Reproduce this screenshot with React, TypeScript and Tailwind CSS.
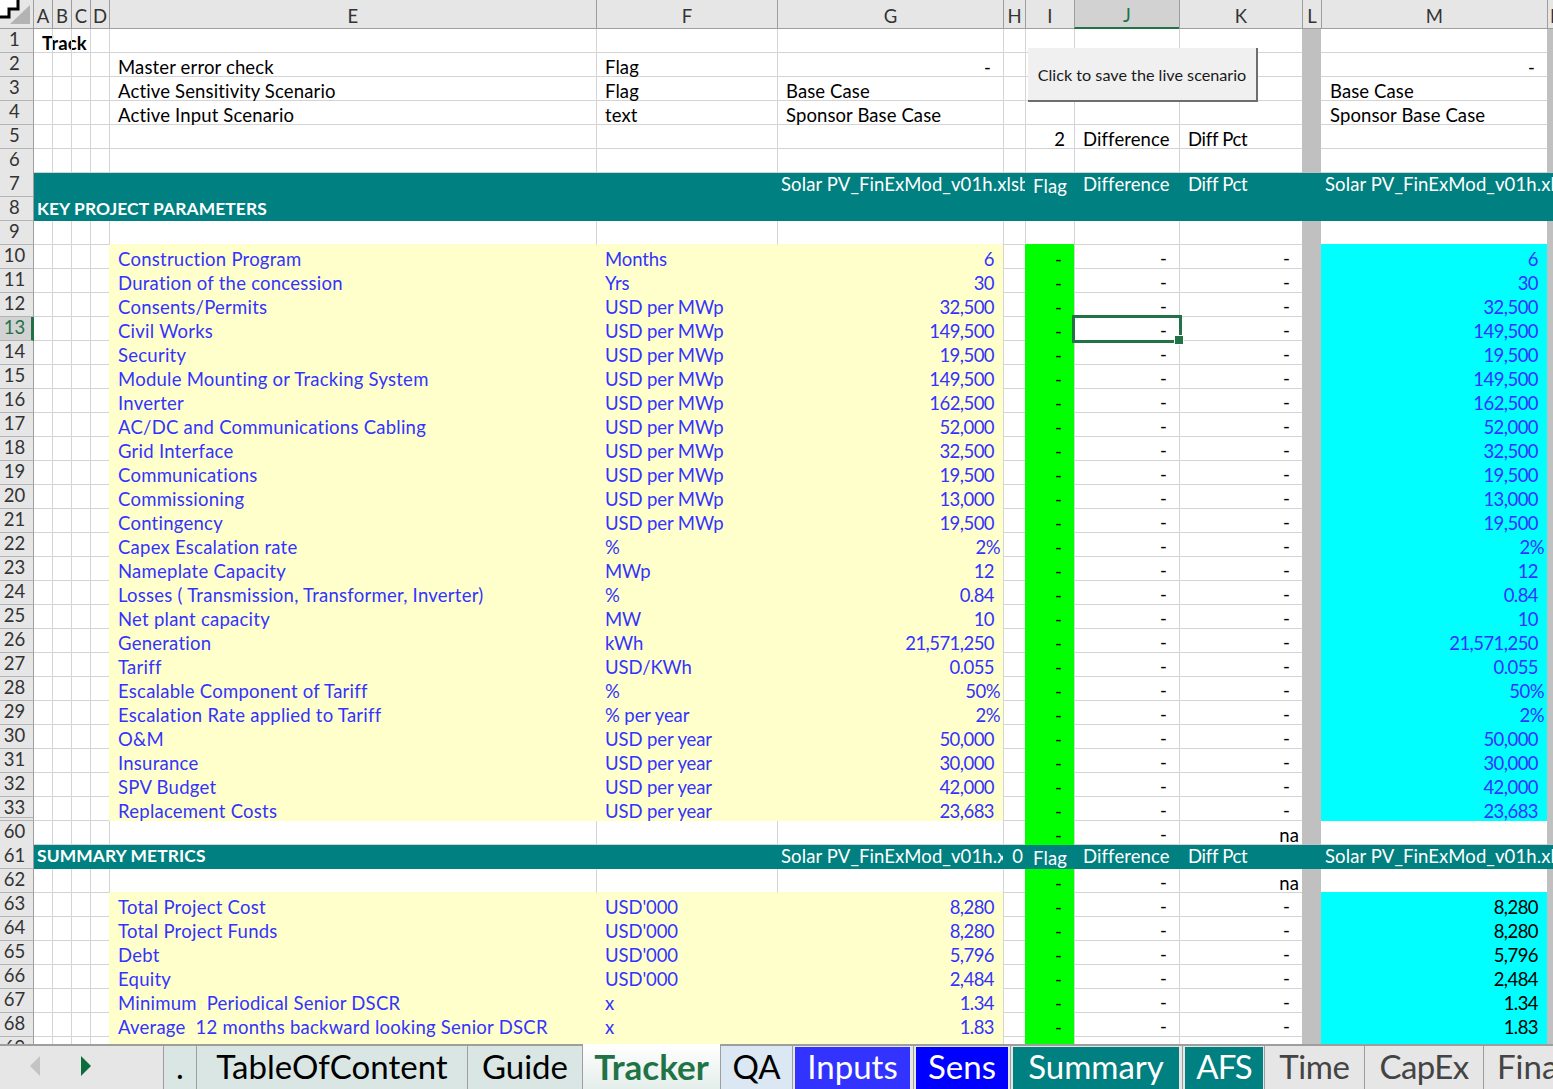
import React from "react";

const COLS =
  "grid grid-rows-[minmax(0,1fr)] grid-cols-[34px_18px_19px_19px_19px_487px_181px_226px_22px_49px_105px_123px_19px_226px_6px]";
const LINE = "border-l border-b border-[#d4d4d4]";
const TXT = "flex items-end whitespace-pre pb-[1px]";
const PLAIN = `${TXT} leading-[16px]`;
const DATA = `${TXT} leading-[18px]`;

type Data = { n: number; e: string; f: string; g: string; pct?: boolean; black?: boolean };

const inputs: Data[] = [
  { n: 10, e: "Construction Program", f: "Months", g: "6" },
  { n: 11, e: "Duration of the concession", f: "Yrs", g: "30" },
  { n: 12, e: "Consents/Permits", f: "USD per MWp", g: "32,500" },
  { n: 13, e: "Civil Works", f: "USD per MWp", g: "149,500" },
  { n: 14, e: "Security", f: "USD per MWp", g: "19,500" },
  { n: 15, e: "Module Mounting or Tracking System", f: "USD per MWp", g: "149,500" },
  { n: 16, e: "Inverter", f: "USD per MWp", g: "162,500" },
  { n: 17, e: "AC/DC and Communications Cabling", f: "USD per MWp", g: "52,000" },
  { n: 18, e: "Grid Interface", f: "USD per MWp", g: "32,500" },
  { n: 19, e: "Communications", f: "USD per MWp", g: "19,500" },
  { n: 20, e: "Commissioning", f: "USD per MWp", g: "13,000" },
  { n: 21, e: "Contingency", f: "USD per MWp", g: "19,500" },
  { n: 22, e: "Capex Escalation rate", f: "%", g: "2%", pct: true },
  { n: 23, e: "Nameplate Capacity", f: "MWp", g: "12" },
  { n: 24, e: "Losses ( Transmission, Transformer, Inverter)", f: "%", g: "0.84" },
  { n: 25, e: "Net plant capacity", f: "MW", g: "10" },
  { n: 26, e: "Generation", f: "kWh", g: "21,571,250" },
  { n: 27, e: "Tariff", f: "USD/KWh", g: "0.055" },
  { n: 28, e: "Escalable Component of Tariff", f: "%", g: "50%", pct: true },
  { n: 29, e: "Escalation Rate applied to Tariff", f: "% per year", g: "2%", pct: true },
  { n: 30, e: "O&M", f: "USD per year", g: "50,000" },
  { n: 31, e: "Insurance", f: "USD per year", g: "30,000" },
  { n: 32, e: "SPV Budget", f: "USD per year", g: "42,000" },
  { n: 33, e: "Replacement Costs", f: "USD per year", g: "23,683" },
];

const metrics: Data[] = [
  { n: 63, e: "Total Project Cost", f: "USD'000", g: "8,280", black: true },
  { n: 64, e: "Total Project Funds", f: "USD'000", g: "8,280", black: true },
  { n: 65, e: "Debt", f: "USD'000", g: "5,796", black: true },
  { n: 66, e: "Equity", f: "USD'000", g: "2,484", black: true },
  { n: 67, e: "Minimum  Periodical Senior DSCR", f: "x", g: "1.34", black: true },
  { n: 68, e: "Average  12 months backward looking Senior DSCR", f: "x", g: "1.83", black: true },
  { n: 69, e: "Lockup threshold", f: "x", g: "1.10", black: true },
];

function RowHead({ n, active }: { n: number; active?: boolean }) {
  if (active) {
    return (
      <div className="flex items-center justify-center pr-[2px] pb-[3px] bg-[#d2d2d2] text-[#217346] border-b border-[#b4b4b4] border-r-[3px] border-r-[#217346]">
        {n}
      </div>
    );
  }
  return (
    <div
      className={`flex items-center justify-center pr-[4px] pb-[3px] bg-[#e6e6e6] text-[#333] border-b border-[#b4b4b4] border-r border-r-[#9e9e9e] ${
        n === 33 ? "shadow-[inset_0_-2px_0_#e6e6e6,inset_0_-3px_0_#b4b4b4]" : ""
      }`}
    >
      {n}
    </div>
  );
}

function Gutter() {
  return (
    <>
      <div className="border-b border-[#d4d4d4]" />
      <div className={LINE} />
      <div className={LINE} />
      <div className={LINE} />
    </>
  );
}

function PlainRow({
  n,
  fillNext,
  e,
  f,
  g,
  gDash,
  i,
  j,
  k,
  m,
  mDash,
}: {
  n: number;
  fillNext?: boolean;
  e?: string;
  f?: string;
  g?: string;
  gDash?: boolean;
  i?: string;
  j?: string;
  k?: string;
  m?: string;
  mDash?: boolean;
}) {
  const yb = fillNext ? "border-b-[#ffffcc]" : "border-b-[#d4d4d4]";
  return (
    <div className={`${COLS} h-[24px]`}>
      <RowHead n={n} />
      <Gutter />
      <div className={`${PLAIN} pl-[8px] tracking-[0.15px] border-l border-b border-l-[#d4d4d4] ${yb}`}>{e}</div>
      <div className={`${PLAIN} pl-[8px] border-l border-b border-l-[#d4d4d4] ${yb}`}>{f}</div>
      <div className={`${PLAIN} border-l border-b border-l-[#d4d4d4] ${yb} ${gDash ? "justify-end pr-[12px]" : "pl-[8px]"}`}>{g}</div>
      <div className={LINE} />
      <div className={`${PLAIN} justify-end pr-[9px] border-l border-b border-l-[#d4d4d4] ${fillNext ? "border-b-[#00ff00]" : "border-b-[#d4d4d4]"}`}>{i}</div>
      <div className={`${PLAIN} pl-[8px] ${LINE}`}>{j}</div>
      <div className={`${PLAIN} pl-[8px] tracking-[-0.3px] ${LINE}`}>{k}</div>
      <div className="bg-[#c0c0c0]" />
      <div className={`${PLAIN} border-b ${fillNext ? "border-b-[#00ffff]" : "border-b-[#d4d4d4]"} ${mDash ? "justify-end pr-[12px]" : "pl-[9px]"}`}>{m}</div>
      <div className="bg-[#c0c0c0]" />
    </div>
  );
}

function DataRow({ d }: { d: Data }) {
  const blue = "text-[#3333ff]";
  return (
    <div className={`${COLS} h-[24px]`}>
      <RowHead n={d.n} active={d.n === 13} />
      <Gutter />
      <div className={`${DATA} pl-[9px] tracking-[0.25px] bg-[#ffffcc] ${blue}`}>{d.e}</div>
      <div className={`${DATA} pl-[9px] tracking-[-0.1px] bg-[#ffffcc] ${blue}`}>{d.f}</div>
      <div className={`${DATA} justify-end tracking-[-0.55px] bg-[#ffffcc] ${blue} ${d.pct ? "pr-[3px]" : "pr-[9px]"}`}>{d.g}</div>
      <div className={LINE} />
      <div className={`${DATA} justify-end pr-[12px] bg-[#00ff00]`}>-</div>
      <div className={`${DATA} justify-end pr-[12px] ${LINE}`}>-</div>
      <div className={`${DATA} justify-end pr-[12px] ${LINE}`}>-</div>
      <div className="bg-[#c0c0c0]" />
      <div className={`${DATA} justify-end tracking-[-0.55px] bg-[#00ffff] ${d.black ? "text-black" : blue} ${d.pct ? "pr-[3px]" : "pr-[9px]"}`}>{d.g}</div>
      <div className="bg-[#c0c0c0]" />
    </div>
  );
}

function NaRow({ n, fillNext }: { n: number; fillNext?: boolean }) {
  const yb = fillNext ? "border-b-[#ffffcc]" : "border-b-[#d4d4d4]";
  return (
    <div className={`${COLS} h-[24px]`}>
      <RowHead n={n} />
      <Gutter />
      <div className={`border-l border-l-[#d4d4d4] border-b ${yb}`} />
      <div className={`border-l border-l-[#d4d4d4] border-b ${yb}`} />
      <div className={`border-l border-l-[#d4d4d4] border-b ${yb}`} />
      <div className={LINE} />
      <div className={`${DATA} justify-end pr-[12px] bg-[#00ff00]`}>-</div>
      <div className={`${DATA} justify-end pr-[12px] ${LINE}`}>-</div>
      <div className={`${PLAIN} justify-end pr-[3px] ${LINE}`}>na</div>
      <div className="bg-[#c0c0c0]" />
      <div className={`border-b ${fillNext ? "border-b-[#00ffff]" : "border-b-[#d4d4d4]"}`} />
      <div className="bg-[#c0c0c0]" />
    </div>
  );
}

const Solar = "Solar PV_FinExMod_v01h.xlsb";

function Header() {
  const base =
    "flex items-center justify-center bg-[#e6e6e6] text-[#333] border-l border-l-[#9e9e9e] border-b border-b-[#9e9e9e] pt-[3px]";
  const labels = ["B", "C", "D", "E", "F", "G", "H", "I"];
  return (
    <div className={`${COLS} h-[29px]`}>
      <div className="bg-[#e6e6e6] border-r border-r-[#9e9e9e] border-b border-b-[#9e9e9e] overflow-hidden">
        <svg width="33" height="28" viewBox="0 0 33 28">
          <polygon points="10,24 30,5 30,24" fill="#b3b3b3" />
          <polygon points="0,0 18,0 18,9 9,9 9,17 0,17" fill="#ffffff" />
          <polyline points="18,0 18,9 9,9 9,17 0,17" fill="none" stroke="#000000" strokeWidth="3" />
        </svg>
      </div>
      <div className="flex items-center justify-center bg-[#e6e6e6] text-[#333] border-b border-b-[#9e9e9e] pt-[3px]">A</div>
      {labels.map((l) => (
        <div key={l} className={base}>
          {l}
        </div>
      ))}
      <div className="flex items-center justify-center bg-[#d2d2d2] text-[#217346] border-l border-l-[#9e9e9e] border-b-2 border-b-[#217346] pt-[3px]">
        J
      </div>
      <div className={base}>K</div>
      <div className={base}>L</div>
      <div className={base}>M</div>
      <div className="flex items-center bg-[#e6e6e6] text-[#333] border-l border-l-[#9e9e9e] border-b border-b-[#9e9e9e] pt-[3px] pl-[2px] overflow-hidden">
        N
      </div>
    </div>
  );
}

function Tab({
  label,
  w,
  inner = "",
  text = "text-black",
}: {
  label: string;
  w: string;
  inner?: string;
  text?: string;
}) {
  return (
    <div className={`${w} h-full border-r border-r-[#9e9e9e] flex items-center justify-center pb-[3px] whitespace-nowrap ${inner} ${text}`}>
      {label}
    </div>
  );
}

const TEAL_TXT = "pl-[9px] leading-[24px]";
const BOLD_HEAD = "pl-[3px] font-bold text-[17.4px] whitespace-nowrap leading-[24px]";

export default function App() {
  return (
    <div className="w-[1553px] h-[1089px] overflow-hidden bg-white flex flex-col [font-family:Lato,sans-serif] text-[18.5px] leading-[22px] tracking-[0.1px] text-black">
      <div className="relative h-[1044px] overflow-hidden shrink-0">
        <Header />

        <div className={`${COLS} h-[24px]`}>
          <RowHead n={1} />
          <div className={`${PLAIN} border-b border-[#d4d4d4] pl-[8px] font-bold`}>Track</div>
          <div className={LINE} />
          <div className={LINE} />
          <div className={LINE} />
          <div className={LINE} />
          <div className={LINE} />
          <div className={LINE} />
          <div className={LINE} />
          <div className={LINE} />
          <div className={LINE} />
          <div className={LINE} />
          <div className="bg-[#c0c0c0]" />
          <div className="border-b border-b-[#d4d4d4]" />
          <div className="bg-[#c0c0c0]" />
        </div>
        <PlainRow n={2} e="Master error check" f="Flag" g="-" gDash m="-" mDash />
        <PlainRow n={3} e="Active Sensitivity Scenario" f="Flag" g="Base Case" m="Base Case" />
        <PlainRow n={4} e="Active Input Scenario" f="text" g="Sponsor Base Case" m="Sponsor Base Case" />
        <PlainRow n={5} i="2" j="Difference" k="Diff Pct" />
        <PlainRow n={6} />

        <div className={`${COLS} h-[25px] -mt-px bg-[#008080] text-white`}>
          <RowHead n={7} />
          <div className="col-span-6" />
          <div className="col-span-2 overflow-hidden whitespace-nowrap pl-[4px] leading-[24px]">{Solar}</div>
          <div className="flex justify-center pl-[1px] pt-[2px] leading-[24px]">Flag</div>
          <div className={TEAL_TXT}>Difference</div>
          <div className={`${TEAL_TXT} tracking-[-0.3px]`}>Diff Pct</div>
          <div />
          <div className="col-span-2 overflow-hidden whitespace-nowrap pl-[4px] leading-[24px]">{Solar}</div>
        </div>
        <div className={`${COLS} h-[24px] bg-[#008080] text-white`}>
          <RowHead n={8} />
          <div className={`col-span-14 ${BOLD_HEAD}`}>KEY PROJECT PARAMETERS</div>
        </div>
        <PlainRow n={9} fillNext />

        {inputs.map((d) => (
          <DataRow key={d.n} d={d} />
        ))}

        <NaRow n={60} />

        <div className={`${COLS} h-[25px] -mt-px bg-[#008080] text-white`}>
          <RowHead n={61} />
          <div className={`col-span-6 ${BOLD_HEAD}`}>SUMMARY METRICS</div>
          <div className="overflow-hidden whitespace-nowrap pl-[4px] leading-[24px]">{Solar}</div>
          <div className="flex justify-end pr-[2px] leading-[24px]">0</div>
          <div className="flex justify-center pl-[1px] pt-[2px] leading-[24px] overflow-hidden">Flag</div>
          <div className={TEAL_TXT}>Difference</div>
          <div className={`${TEAL_TXT} tracking-[-0.3px]`}>Diff Pct</div>
          <div />
          <div className="col-span-2 overflow-hidden whitespace-nowrap pl-[4px] leading-[24px]">{Solar}</div>
        </div>

        <NaRow n={62} fillNext />

        {metrics.map((d) => (
          <DataRow key={d.n} d={d} />
        ))}

        {/* form button floating over the sheet */}
        <div className="absolute left-[1028px] top-[48px] w-[230px] h-[54px] bg-[#f0f0f0] border-r-2 border-b-2 border-r-[#6e6e6e] border-b-[#6e6e6e] flex items-center justify-center pt-[1px] text-[16.2px] tracking-normal text-[#1a1a1a] whitespace-nowrap">
          Click to save the live scenario
        </div>

        {/* active cell selection */}
        <div className="absolute left-[1072px] top-[315px] w-[110px] h-[28px] border-[3px] border-[#217346]" />
        <div className="absolute left-[1174px] top-[335px] w-[10px] h-[10px] bg-[#217346] border border-white" />
      </div>

      <div className="h-[45px] shrink-0 flex bg-[#e6e6e6] border-t-2 border-t-[#9e9e9e] text-[33px] leading-none tracking-normal">
        <div className="w-[164px] h-full shrink-0 border-r border-r-[#9e9e9e] flex items-center pl-[29px] gap-[39px] pb-[3px]">
          <svg width="12" height="20" viewBox="0 0 12 20">
            <polygon points="11,0 11,20 1,10" fill="#c4c4c4" />
          </svg>
          <svg width="12" height="20" viewBox="0 0 12 20">
            <polygon points="1,0 1,20 11,10" fill="#0e6b3c" />
          </svg>
        </div>
        <Tab label="." w="w-[33px]" inner="bg-[#dae6e3]" />
        <Tab label="TableOfContent" w="w-[271px]" inner="bg-[#dae6e3]" />
        <Tab label="Guide" w="w-[115px]" inner="bg-[#dae6e3]" />
        <div className="w-[138px] h-[45px] -mt-[2px] pt-[2px] bg-gradient-to-b from-white to-[#e4eeea] border-r border-r-[#9e9e9e] flex items-center justify-center pb-[3px] text-[35px] font-bold text-[#217346]">
          Tracker
        </div>
        <Tab label="QA" w="w-[72px]" inner="bg-[#dbe7f3]" />
        <div className="w-[121px] h-full pt-[1px] pl-[2px] pr-[3px] border-r border-r-[#9e9e9e] flex">
          <div className="flex-1 flex items-center justify-center pb-[3px] bg-[#3333ff] text-white">Inputs</div>
        </div>
        <div className="w-[97px] h-full pt-[1px] pl-[2px] pr-[2px] border-r border-r-[#9e9e9e] flex">
          <div className="flex-1 flex items-center justify-center pb-[3px] bg-[#0000ff] text-white">Sens</div>
        </div>
        <div className="w-[172px] h-full pt-[1px] pl-[2px] pr-[3px] border-r border-r-[#9e9e9e] flex">
          <div className="flex-1 flex items-center justify-center pb-[3px] bg-[#008080] text-white">Summary</div>
        </div>
        <div className="w-[82px] h-full pt-[1px] pl-[2px] pr-[1px] border-r border-r-[#9e9e9e] flex">
          <div className="flex-1 flex items-center justify-center pb-[3px] tracking-[-1px] bg-[#008080] text-white">AFS</div>
        </div>
        <Tab label="Time" w="w-[100px]" text="text-[#444] tracking-[-0.4px]" />
        <Tab label="CapEx" w="w-[119px]" text="text-[#444] tracking-[-0.6px]" />
        <div className="flex-1 flex items-center pl-[13px] pb-[3px] text-[#444] whitespace-nowrap overflow-hidden">Financials</div>
      </div>
    </div>
  );
}
